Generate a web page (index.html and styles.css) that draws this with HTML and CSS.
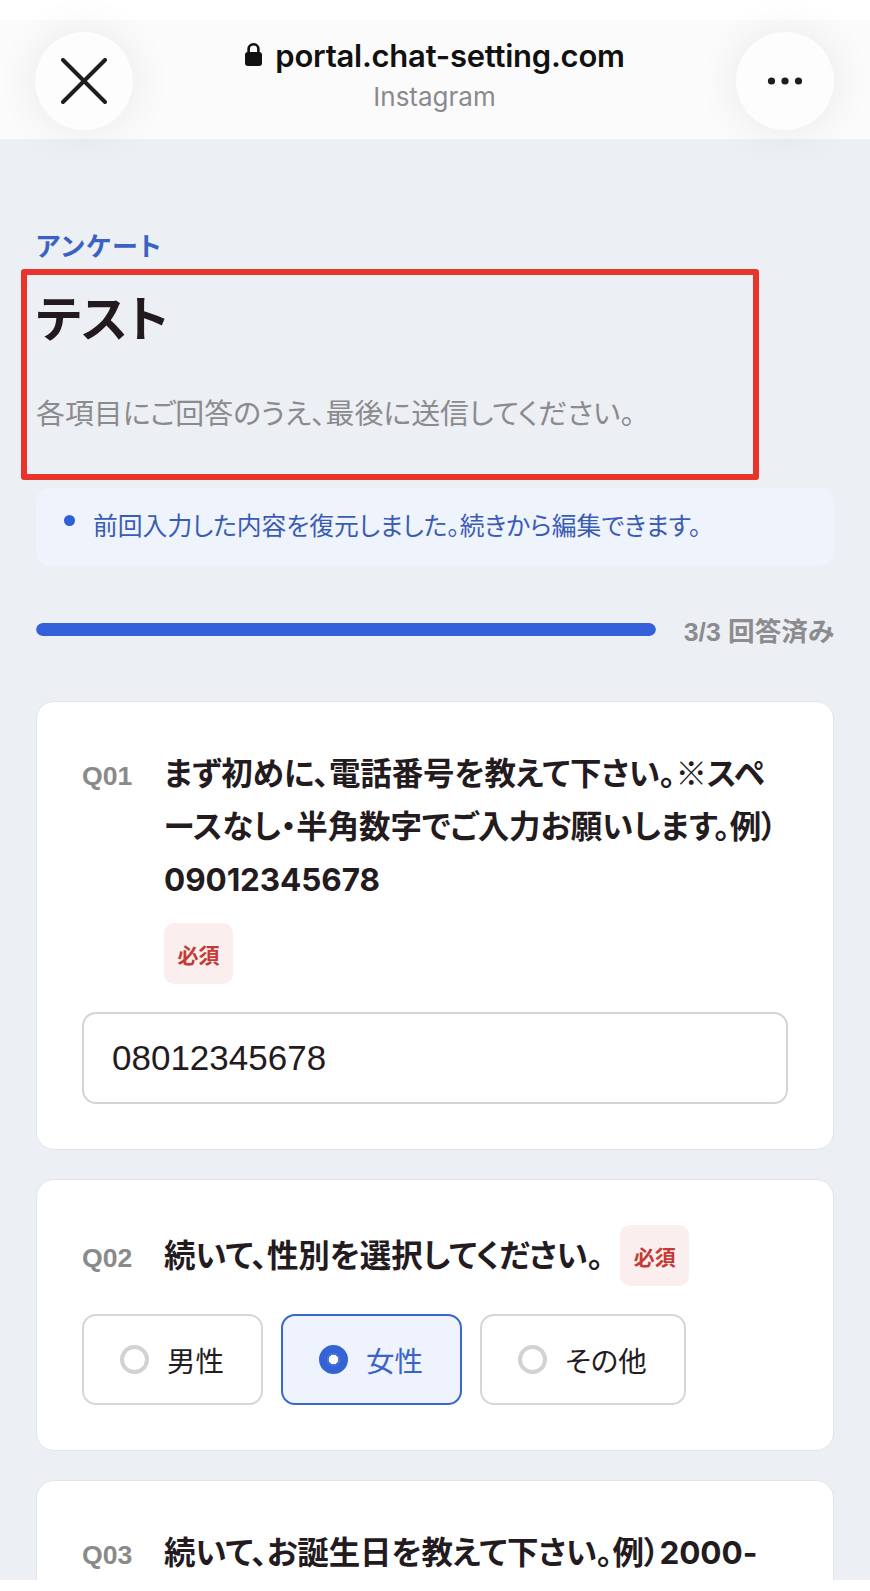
FILE: index.html
```html
<!DOCTYPE html>
<html lang="ja">
<head>
<meta charset="utf-8">
<title>テスト | アンケート</title>
<link rel="stylesheet" href="styles.css">
</head>
<body>
<div class="screen">
  <header class="browser-bar">
    <button class="round-btn" type="button" aria-label="閉じる">
      <svg width="46" height="46" viewBox="0 0 46 46" aria-hidden="true">
        <path d="M2 2 L44 44 M44 2 L2 44" stroke="#1d1d1f" stroke-width="4" stroke-linecap="round" fill="none"/>
      </svg>
    </button>
    <div class="address">
      <div class="url">
        <svg class="lock" width="19" height="24" viewBox="0 0 19 24" aria-hidden="true">
          <path d="M4.6 11 V7.2 a4.9 4.9 0 0 1 9.8 0 V11" stroke="#111" stroke-width="2.6" fill="none"/>
          <rect x="1" y="10" width="17" height="14" rx="3" fill="#111"/>
        </svg>
        <span>portal.chat-setting.com</span>
      </div>
      <div class="app-name">Instagram</div>
    </div>
    <button class="round-btn" type="button" aria-label="メニュー">
      <svg width="36" height="8" viewBox="0 0 36 8" aria-hidden="true">
        <circle cx="4.5" cy="4" r="3.6" fill="#1d1d1f"/>
        <circle cx="18" cy="4" r="3.6" fill="#1d1d1f"/>
        <circle cx="31.5" cy="4" r="3.6" fill="#1d1d1f"/>
      </svg>
    </button>
  </header>

  <main class="survey">
    <p class="eyebrow">アンケート</p>
    <div class="intro">
      <h1 class="title">テスト</h1>
      <p class="lead">各項目にご回答のうえ、最後に送信してください。</p>
      <span class="mark" aria-hidden="true"></span>
    </div>

    <div class="notice">
      <span class="notice-dot"></span>
      <p>前回入力した内容を復元しました。続きから編集できます。</p>
    </div>

    <div class="progress">
      <div class="progress-track"><div class="progress-fill" style="width:100%"></div></div>
      <span class="progress-label">3/3 回答済み</span>
    </div>

    <section class="card">
      <div class="q-head">
        <span class="q-no">Q01</span>
        <div class="q-body">
          <span class="q-text">まず初めに、電話番号を教えて下さい。<span class="jp">※</span>スペースなし・半角数字でご入力お願いします。例）09012345678</span>
          <span class="req">必須</span>
        </div>
      </div>
      <input class="text-input" type="tel" value="08012345678">
    </section>

    <section class="card">
      <div class="q-head">
        <span class="q-no">Q02</span>
        <div class="q-body">
          <span class="q-text">続いて、性別を選択してください。</span>
          <span class="req">必須</span>
        </div>
      </div>
      <div class="options">
        <label class="opt"><input type="radio" name="gender" class="radio">男性</label>
        <label class="opt is-checked"><input type="radio" name="gender" class="radio" checked>女性</label>
        <label class="opt"><input type="radio" name="gender" class="radio">その他</label>
      </div>
    </section>

    <section class="card">
      <div class="q-head">
        <span class="q-no">Q03</span>
        <div class="q-body">
          <span class="q-text">続いて、お誕生日を教えて下さい。例）2000-<wbr><span class="nowrap">01-01</span></span>
          <span class="req">必須</span>
        </div>
      </div>
      <input class="text-input" type="text" value="">
    </section>
  </main>

  <div class="home-strip"></div>
</div>
</body>
</html>
```

FILE: styles.css
```css
* {
  box-sizing: border-box;
}

html,
body {
  margin: 0;
  padding: 0;
}

body {
  width: 870px;
  height: 1591px;
  overflow: hidden;
  background: #eceff4;
  font-family: "Liberation Sans", "Noto Sans CJK JP", sans-serif;
  font-feature-settings: "palt";
  color: #241b1f;
}

.screen {
  height: 1591px;
  display: flex;
  flex-direction: column;
}

/* in-app browser bar */
.browser-bar {
  flex: none;
  height: 139px;
  background: linear-gradient(#fff 0 20px, #fbfbfb 20px);
  display: flex;
  align-items: flex-start;
  justify-content: space-between;
  padding: 32px 36px 0 35px;
}

.round-btn {
  width: 98px;
  height: 98px;
  border: 0;
  padding: 0;
  border-radius: 50%;
  background: #fdfdfd;
  box-shadow: 0 0 44px rgba(0, 0, 0, 0.08);
  display: flex;
  align-items: center;
  justify-content: center;
}

.address {
  margin-top: 6px;
  text-align: center;
  font-family: Inter, "Liberation Sans", sans-serif;
}

.url {
  display: flex;
  align-items: center;
  gap: 12px;
  font-size: 31px;
  font-weight: 600;
  letter-spacing: -0.25px;
  line-height: 36px;
  color: #111;
}

.lock {
  margin-top: -4px;
}

.app-name {
  margin-top: 8px;
  font-size: 26px;
  line-height: 30px;
  color: #8a8a8e;
}

/* survey page */
.survey {
  flex: 1;
  overflow: hidden;
  padding: 90px 36px 0;
}

.eyebrow {
  margin: 0;
  font-size: 26px;
  line-height: 36px;
  font-weight: 700;
  letter-spacing: 1.6px;
  color: #3a62c4;
}

.intro {
  position: relative;
  margin-top: 27px;
}

.title {
  margin: 0;
  font-size: 49px;
  line-height: 56px;
  font-weight: 700;
  color: #231a1d;
}

.lead {
  margin: 46px 0 0;
  font-size: 28.9px;
  line-height: 40px;
  color: #8b8b8d;
}

/* red highlight frame over the heading */
.mark {
  position: absolute;
  top: -23px;
  left: -15px;
  right: 75px;
  bottom: -46px;
  border: 6px solid #e8342a;
  border-radius: 3px;
  pointer-events: none;
}

.notice {
  margin-top: 54px;
  display: flex;
  align-items: flex-start;
  background: #eef3fc;
  border-radius: 14px;
  padding: 19px 24px 19px 28px;
}

.notice-dot {
  flex: none;
  width: 11px;
  height: 11px;
  border-radius: 50%;
  background: #2f5fd6;
  margin: 8px 18px 0 0;
}

.notice p {
  margin: 0;
  font-size: 24.8px;
  line-height: 40px;
  color: #3b5cb5;
}

.progress {
  margin-top: 45px;
  height: 36px;
  display: flex;
  align-items: center;
  gap: 28px;
}

.progress-track {
  flex: 1;
  height: 13px;
  border-radius: 7px;
  background: #dde3ee;
  overflow: hidden;
}

.progress-fill {
  height: 100%;
  border-radius: 7px;
  background: #3461da;
}

.progress-label {
  white-space: nowrap;
  font-size: 26.6px;
  font-weight: 700;
  color: #8c8c8e;
}

/* question cards */
.card {
  margin-top: 54px;
  background: #fff;
  border: 1.5px solid #e1e4e9;
  border-radius: 18px;
  padding: 45px;
}

.card + .card {
  margin-top: 29px;
}

.q-head {
  display: flex;
  align-items: baseline;
  gap: 30px;
  margin-bottom: 28px;
}

.q-no {
  flex: none;
  width: 52px;
  font-size: 26.6px;
  font-weight: 700;
  color: #8a8a8a;
}

.q-body {
  flex: 1;
  min-width: 0;
  display: flex;
  flex-wrap: wrap;
  align-items: center;
  column-gap: 17px;
  row-gap: 17px;
}

.q-text {
  font-family: Inter, "Noto Sans CJK JP", sans-serif;
  font-size: 31.5px;
  letter-spacing: -0.1px;
  line-height: 53px;
  font-weight: 700;
  color: #241b1f;
}

.q-text .jp {
  font-family: "Noto Sans CJK JP", sans-serif;
  line-height: 1;
}

.nowrap {
  white-space: nowrap;
}

.req {
  display: inline-flex;
  align-items: center;
  justify-content: center;
  height: 61px;
  padding: 0 13.5px;
  border-radius: 10px;
  background: #fbeeee;
  font-size: 21px;
  font-weight: 700;
  color: #c53a35;
}

.text-input {
  display: block;
  width: 100%;
  height: 92px;
  margin: 0;
  padding: 0 28px;
  border: 2px solid #d4d4d6;
  border-radius: 14px;
  background: #fff;
  font-family: "Liberation Sans", "Noto Sans CJK JP", sans-serif;
  font-size: 35px;
  color: #241b1f;
  outline: none;
}

.options {
  display: flex;
  gap: 18px;
}

.opt {
  height: 91px;
  display: inline-flex;
  align-items: center;
  gap: 18px;
  padding: 0 37px 0 36px;
  border: 2px solid #d6d6d8;
  border-radius: 14px;
  background: #fff;
  font-size: 28.5px;
  color: #241b1f;
}

.opt.is-checked {
  border-color: #3b66d0;
  background: #eef3fd;
  color: #3b63c9;
}

.radio {
  appearance: none;
  -webkit-appearance: none;
  flex: none;
  width: 29px;
  height: 29px;
  margin: 0;
  border: 4px solid #d2d2d4;
  border-radius: 50%;
  background: #fff;
}

.radio:checked {
  border-color: #3563d6;
  background: radial-gradient(circle, #fff 0 4.5px, #4a74dc 5px 6.5px, #3563d6 7px);
}

.home-strip {
  flex: none;
  height: 11px;
  background: #fff;
}
```
